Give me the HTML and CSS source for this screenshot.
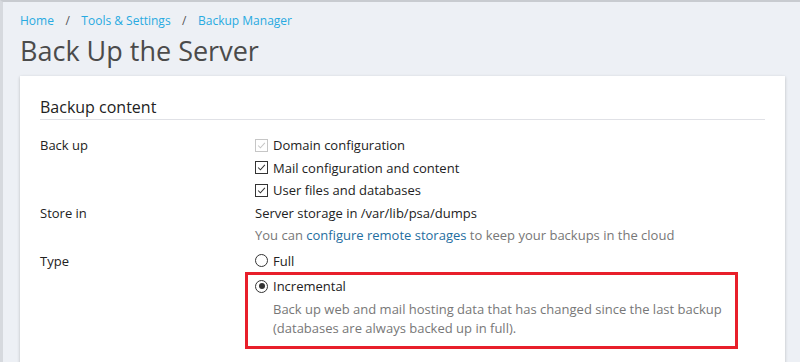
FILE: index.html
```html
<!DOCTYPE html>
<html>
<head>
  <meta charset="UTF-8">
  <title>Back Up the Server</title>
  <link rel="stylesheet" href="styles.css">
</head>
<body>
  <div class="page">
    <div class="breadcrumbs">
      <a href="#">Home</a><span class="sep">/</span><a href="#">Tools &amp; Settings</a><span class="sep">/</span><a href="#">Backup Manager</a>
    </div>
    <h1 class="title">Back Up the Server</h1>

    <div class="card">
      <h2 class="section-title">Backup content</h2>

      <div class="form-row">
        <div class="label">Back up</div>
        <div class="field">
          <div class="option"><span class="check disabled"><svg viewBox="0 0 13 13"><path d="M2.5 6.5 L5.2 9.2 L10.5 3.5" /></svg></span>Domain configuration</div>
          <div class="option"><span class="check"><svg viewBox="0 0 13 13"><path d="M2.5 6.5 L5.2 9.2 L10.5 3.5" /></svg></span>Mail configuration and content</div>
          <div class="option"><span class="check"><svg viewBox="0 0 13 13"><path d="M2.5 6.5 L5.2 9.2 L10.5 3.5" /></svg></span>User files and databases</div>
        </div>
      </div>

      <div class="form-row store">
        <div class="label">Store in</div>
        <div class="field">
          <div class="option">Server storage in /var/lib/psa/dumps</div>
          <div class="option hint">You can <a href="#">configure remote storages</a> to keep your backups in the cloud</div>
        </div>
      </div>

      <div class="form-row type">
        <div class="label">Type</div>
        <div class="field">
          <div class="option"><span class="radio"></span>Full</div>
          <div class="highlight">
            <div class="option"><span class="radio on"></span>Incremental</div>
            <div class="desc">Back up web and mail hosting data that has changed since the last backup<br>(databases are always backed up in full).</div>
          </div>
        </div>
      </div>
    </div>
  </div>
</body>
</html>
```

FILE: styles.css
```css
body {
  margin: 0;
  background-color: #edf0f5;
  font-family: "Open Sans", "Noto Sans", sans-serif;
  font-size: 13px;
  color: #333;
  border-top: 2px solid #c8cbd0;
  border-left: 3px solid #d6d9de;
  height: 360px;
  overflow: hidden;
}
.page {
  padding: 10px 15px 0 17px;
}
.breadcrumbs {
  font-size: 12px;
  line-height: 18px;
}
.breadcrumbs a {
  color: #28aae1;
  text-decoration: none;
}
.breadcrumbs .sep {
  color: #555;
  margin: 0 11.5px;
}
.title {
  margin: 4px 0 0 0;
  font-size: 27px;
  font-weight: normal;
  line-height: 33px;
  color: #4b4b4b;
}
.card {
  margin-top: 9px;
  background: #fff;
  box-shadow: 0 1px 3px rgba(0, 0, 0, 0.22);
  padding: 20px 20px 30px 20px;
}
.section-title {
  margin: 0;
  font-size: 16px;
  font-weight: normal;
  line-height: 23px;
  color: #222;
  border-bottom: 1px solid #e0e1e6;
}
.form-row {
  display: flex;
  margin-top: 14px;
}
.form-row.store {
  margin-top: 0;
}
.form-row.type {
  margin-top: 3px;
}
.label {
  width: 215px;
  flex-shrink: 0;
  line-height: 22.5px;
  color: #222;
}
.field {
  flex: 1;
}
.option {
  line-height: 22.5px;
  display: flex;
  align-items: center;
  color: #222;
}
.hint {
  display: block;
  color: #777;
}
.hint a {
  color: #1f6ea0;
  text-decoration: none;
}
.check {
  width: 11px;
  height: 11px;
  border: 1px solid #333;
  margin-right: 5px;
  display: inline-flex;
}
.check svg {
  width: 11px;
  height: 11px;
  fill: none;
  stroke: #333;
  stroke-width: 1.2;
}
.check.disabled {
  border-color: #c6c6c6;
}
.check.disabled svg {
  stroke: #c6c6c6;
}
.radio {
  width: 11px;
  height: 11px;
  border: 1px solid #333;
  border-radius: 50%;
  margin-right: 5px;
  position: relative;
}
.radio.on::after {
  content: "";
  position: absolute;
  left: 2.5px;
  top: 2.5px;
  width: 6px;
  height: 6px;
  border-radius: 50%;
  background: #333;
}
.highlight {
  margin: 0 0 0 -10px;
  width: 480px;
  border: 3px solid #e81f2a;
  padding: 0 0 8px 7px;
}
.desc {
  margin-top: 2px;
  padding-left: 18px;
  line-height: 19px;
  color: #777;
}
```
